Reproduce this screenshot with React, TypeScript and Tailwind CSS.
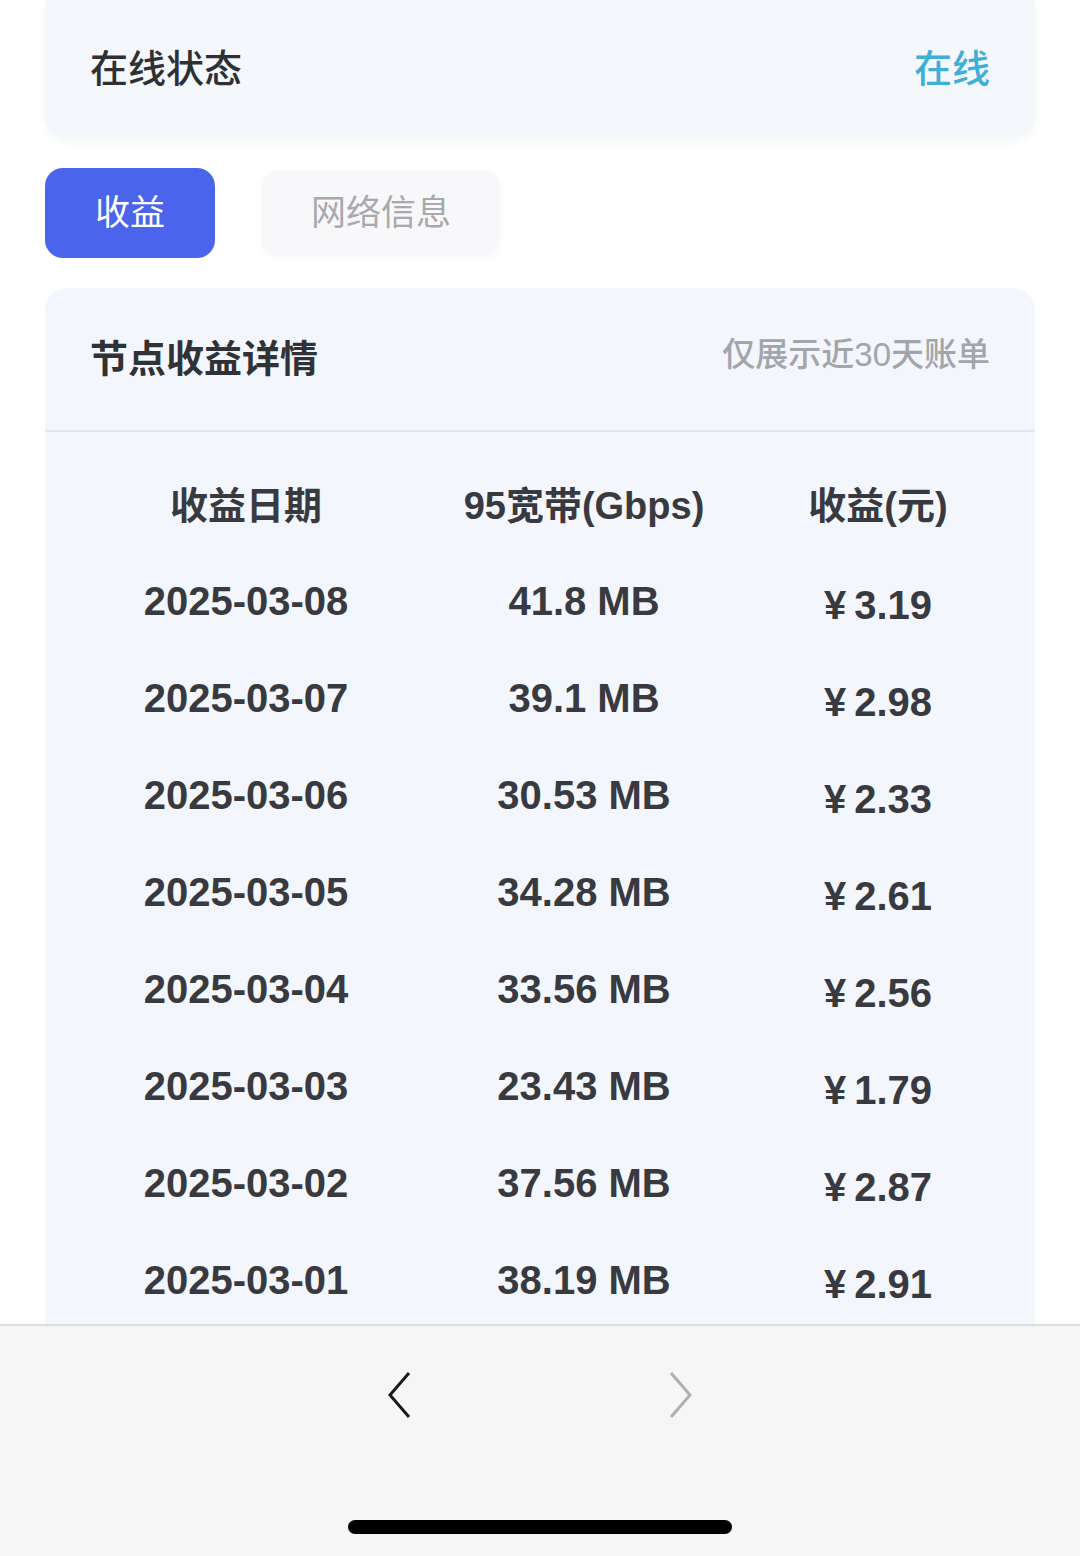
const rows = [
  { date: '2025-03-08', bw: '41.8 MB', amount: '3.19' },
  { date: '2025-03-07', bw: '39.1 MB', amount: '2.98' },
  { date: '2025-03-06', bw: '30.53 MB', amount: '2.33' },
  { date: '2025-03-05', bw: '34.28 MB', amount: '2.61' },
  { date: '2025-03-04', bw: '33.56 MB', amount: '2.56' },
  { date: '2025-03-03', bw: '23.43 MB', amount: '1.79' },
  { date: '2025-03-02', bw: '37.56 MB', amount: '2.87' },
  { date: '2025-03-01', bw: '38.19 MB', amount: '2.91' },
]

export default function App() {
  return (
    <div className="flex h-[1556px] w-[1080px] flex-col overflow-hidden bg-white font-['Liberation_Sans','Noto_Sans_CJK_SC',sans-serif]">
      <div className="mx-[45px] flex h-[138px] shrink-0 items-center justify-between rounded-b-[22px] bg-[#f4f7fc] px-[45px] shadow-[0_4px_10px_rgba(180,190,210,0.12)]">
        <span className="text-[38px] font-medium text-[#2f3033]">在线状态</span>
        <span className="text-[38px] font-medium text-[#3fafd8]">在线</span>
      </div>

      <div className="mx-[45px] mt-[30px] flex shrink-0 items-center gap-[47px]">
        <button
          type="button"
          className="flex h-[90px] w-[170px] items-center justify-center rounded-[18px] bg-[#4a64ec] text-[35px] text-white"
        >
          收益
        </button>
        <button
          type="button"
          className="flex h-[84px] w-[238px] items-center justify-center rounded-[16px] bg-[#f8f8fa] text-[35px] text-[#a9a9ad] shadow-[0_2px_8px_rgba(200,200,210,0.15)]"
        >
          网络信息
        </button>
      </div>

      <div className="mx-[45px] mt-[30px] shrink-0 rounded-t-[22px] bg-[#f3f6fc]">
        <div className="flex h-[144px] items-center justify-between border-b-2 border-[#e3e7ef] px-[45px]">
          <span className="text-[38px] font-bold text-[#303236]">节点收益详情</span>
          <span className="mb-[8px] text-[33px] font-medium text-[#a3a5aa]">仅展示近30天账单</span>
        </div>
        <div className="pt-[27px] text-[40px] font-bold text-[#383a40]">
          <div className="grid h-[94px] grid-cols-[402px_274px_314px] items-center text-center text-[38px]">
            <span>收益日期</span>
            <span>95宽带(Gbps)</span>
            <span>收益(元)</span>
          </div>
          {rows.map((r, i) => (
            <div
              key={r.date}
              className={`grid grid-cols-[402px_274px_314px] items-start text-center ${
                i === rows.length - 1 ? 'h-[92px]' : 'h-[97px]'
              }`}
            >
              <span className="h-[97px] leading-[97px]">{r.date}</span>
              <span className="h-[97px] leading-[97px]">{r.bw}</span>
              <span className="h-[97px] pt-[4px] leading-[97px]">¥{'\u2009'}{r.amount}</span>
            </div>
          ))}
        </div>
      </div>

      <div className="relative flex flex-1 flex-col items-center border-t-2 border-[#dcdde0] bg-[#f6f6f6]">
        <div className="mt-[45px] flex w-full justify-center gap-[256px]">
          <svg width="26" height="48" viewBox="0 0 26 48" fill="none">
            <path d="M23 2 L4 24 L23 46" stroke="#1a1a1a" strokeWidth="3" />
          </svg>
          <svg width="26" height="48" viewBox="0 0 26 48" fill="none">
            <path d="M3 2 L22 24 L3 46" stroke="#b0b0b0" strokeWidth="3" />
          </svg>
        </div>
        <div className="absolute bottom-[22px] h-[14px] w-[384px] rounded-full bg-black" />
      </div>
    </div>
  )
}
